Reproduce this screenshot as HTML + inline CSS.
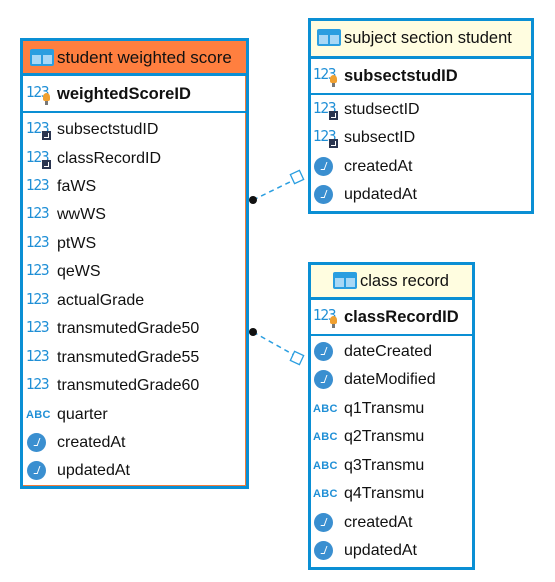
<!DOCTYPE html>
<html><head><meta charset="utf-8"><style>
body{margin:0;width:555px;height:582px;background:#fff;position:relative;overflow:hidden;font-family:"Liberation Sans",sans-serif;font-size:16px;color:#111}
.t{position:absolute;border:3px solid #0a8fd4;box-sizing:border-box;background:#fff}
.h{position:absolute;left:0;right:0;top:0;border-bottom:3px solid #0a8fd4;box-sizing:border-box}
.kr{position:absolute;left:0;right:0;border-bottom:2px solid #0a8fd4;box-sizing:border-box}
.r{position:absolute;height:20px;line-height:20px;white-space:nowrap}
.ic{position:absolute;left:-31px;top:0px;width:26px;height:20px}
.n{font-size:15.5px;font-weight:normal;color:#1f8fd6;letter-spacing:-1.5px;line-height:16px;font-family:"DejaVu Sans Condensed","Liberation Sans",sans-serif}
.c{width:19px!important;height:19px;border-radius:50%;background:#3a8fd0;left:-30px!important}
.c:after{content:"";position:absolute;left:8px;top:5px;width:3px;height:7px;border-right:1.5px solid #fff;border-bottom:1.5px solid #fff;transform:skewX(-20deg)}
.a{font-size:11px;font-weight:bold;color:#1f8fd6;line-height:20px;letter-spacing:0.3px}
.fk{position:absolute;left:16px;top:11px;width:9px;height:9px;background:#2a3550}
.fk:after{content:"";position:absolute;left:2px;top:2px;width:4px;height:4px;border:1px solid #fff;border-top:none;border-left:none}
.pk{position:absolute;left:17px;top:9px;width:7px;height:8px;border-radius:50% 50% 2px 2px;background:#f0a030}
.pk:after{content:"";position:absolute;left:2px;top:8px;width:3px;height:4px;background:#777}
.ti{position:absolute;width:24px;height:17px;background:#2a9ee0;border-radius:2px}
.ti:before{content:"";position:absolute;left:2px;top:6px;width:9px;height:9px;background:#a8d8f6;box-shadow:11px 0 0 #a8d8f6}
</style></head><body>

<svg width="555" height="582" style="position:absolute;left:0;top:0">
<line x1="253" y1="200" x2="294" y2="180" stroke="#2a9ee0" stroke-width="1.5" stroke-dasharray="5,4"/>
<rect x="292" y="172" width="10" height="10" fill="#fff" stroke="#2a9ee0" stroke-width="1.3" transform="rotate(-25 297 177)"/>
<circle cx="253" cy="200" r="4" fill="#111"/>
<line x1="253" y1="332" x2="294" y2="355" stroke="#2a9ee0" stroke-width="1.5" stroke-dasharray="5,4"/>
<rect x="292" y="353" width="10" height="10" fill="#fff" stroke="#2a9ee0" stroke-width="1.3" transform="rotate(25 297 358)"/>
<circle cx="253" cy="332" r="4" fill="#111"/>
</svg>

<div class="t" style="left:20px;top:38px;width:229px;height:451px;box-shadow:inset -1px 0 0 #f07b3a,inset 0 -1px 0 #f07b3a">
 <div class="h" style="height:35px;background:#ff7f3f"><div class="ti" style="left:7px;top:8px"></div><div class="r" style="left:34px;top:7px;font-size:17px">student weighted score</div></div>
 <div class="kr" style="top:35px;height:37px"><div class="r" style="left:34px;top:8px;font-weight:bold;font-size:16.5px"><span class="ic n">123<i class="pk"></i></span>weightedScoreID</div></div>
 <div class="r" style="left:34px;top:79px"><span class="ic n">123<i class="fk"></i></span>subsectstudID</div>
 <div class="r" style="left:34px;top:108px"><span class="ic n">123<i class="fk"></i></span>classRecordID</div>
 <div class="r" style="left:34px;top:136px"><span class="ic n">123</span>faWS</div>
 <div class="r" style="left:34px;top:164px"><span class="ic n">123</span>wwWS</div>
 <div class="r" style="left:34px;top:193px"><span class="ic n">123</span>ptWS</div>
 <div class="r" style="left:34px;top:221px"><span class="ic n">123</span>qeWS</div>
 <div class="r" style="left:34px;top:250px"><span class="ic n">123</span>actualGrade</div>
 <div class="r" style="left:34px;top:278px"><span class="ic n">123</span>transmutedGrade50</div>
 <div class="r" style="left:34px;top:307px"><span class="ic n">123</span>transmutedGrade55</div>
 <div class="r" style="left:34px;top:335px"><span class="ic n">123</span>transmutedGrade60</div>
 <div class="r" style="left:34px;top:364px"><span class="ic a">ABC</span>quarter</div>
 <div class="r" style="left:34px;top:392px"><span class="ic c"></span>createdAt</div>
 <div class="r" style="left:34px;top:420px"><span class="ic c"></span>updatedAt</div>
</div>

<div class="t" style="left:308px;top:18px;width:226px;height:196px">
 <div class="h" style="height:38px;background:#fffde0"><div class="ti" style="left:6px;top:8px"></div><div class="r" style="left:33px;top:7px;font-size:16.5px">subject section student</div></div>
 <div class="kr" style="top:38px;height:36px"><div class="r" style="left:33px;top:7px;font-weight:bold;font-size:16.5px"><span class="ic n">123<i class="pk"></i></span>subsectstudID</div></div>
 <div class="r" style="left:33px;top:79px"><span class="ic n">123<i class="fk"></i></span>studsectID</div>
 <div class="r" style="left:33px;top:107px"><span class="ic n">123<i class="fk"></i></span>subsectID</div>
 <div class="r" style="left:33px;top:136px"><span class="ic c"></span>createdAt</div>
 <div class="r" style="left:33px;top:164px"><span class="ic c"></span>updatedAt</div>
</div>

<div class="t" style="left:308px;top:262px;width:167px;height:308px">
 <div class="h" style="height:35px;background:#fffde0"><div class="ti" style="left:22px;top:7px"></div><div class="r" style="left:49px;top:6px;font-size:16.5px">class record</div></div>
 <div class="kr" style="top:35px;height:36px"><div class="r" style="left:33px;top:7px;font-weight:bold;font-size:16.5px"><span class="ic n">123<i class="pk"></i></span>classRecordID</div></div>
 <div class="r" style="left:33px;top:77px"><span class="ic c"></span>dateCreated</div>
 <div class="r" style="left:33px;top:105px"><span class="ic c"></span>dateModified</div>
 <div class="r" style="left:33px;top:134px"><span class="ic a">ABC</span>q1Transmu</div>
 <div class="r" style="left:33px;top:162px"><span class="ic a">ABC</span>q2Transmu</div>
 <div class="r" style="left:33px;top:191px"><span class="ic a">ABC</span>q3Transmu</div>
 <div class="r" style="left:33px;top:219px"><span class="ic a">ABC</span>q4Transmu</div>
 <div class="r" style="left:33px;top:248px"><span class="ic c"></span>createdAt</div>
 <div class="r" style="left:33px;top:276px"><span class="ic c"></span>updatedAt</div>
</div>
</body></html>
